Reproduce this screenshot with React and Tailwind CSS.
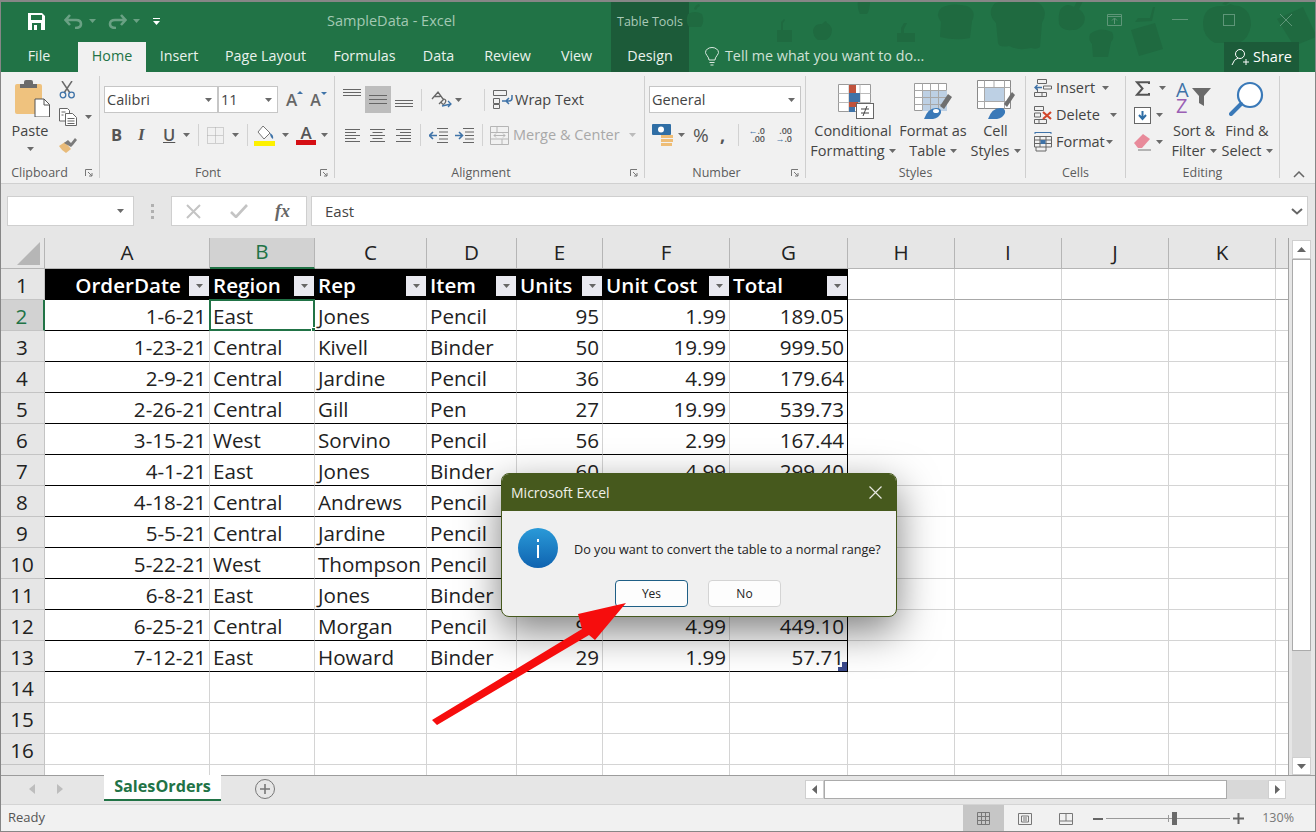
import React from 'react';

const rows = [
  ['1-6-21', 'East', 'Jones', 'Pencil', '95', '1.99', '189.05'],
  ['1-23-21', 'Central', 'Kivell', 'Binder', '50', '19.99', '999.50'],
  ['2-9-21', 'Central', 'Jardine', 'Pencil', '36', '4.99', '179.64'],
  ['2-26-21', 'Central', 'Gill', 'Pen', '27', '19.99', '539.73'],
  ['3-15-21', 'West', 'Sorvino', 'Pencil', '56', '2.99', '167.44'],
  ['4-1-21', 'East', 'Jones', 'Binder', '60', '4.99', '299.40'],
  ['4-18-21', 'Central', 'Andrews', 'Pencil', '75', '1.99', '149.25'],
  ['5-5-21', 'Central', 'Jardine', 'Pencil', '90', '4.99', '449.10'],
  ['5-22-21', 'West', 'Thompson', 'Pencil', '32', '1.99', '63.68'],
  ['6-8-21', 'East', 'Jones', 'Binder', '60', '8.99', '539.40'],
  ['6-25-21', 'Central', 'Morgan', 'Pencil', '90', '4.99', '449.10'],
  ['7-12-21', 'East', 'Howard', 'Binder', '29', '1.99', '57.71'],
];

const headers = ['OrderDate', 'Region', 'Rep', 'Item', 'Units', 'Unit Cost', 'Total'];
const letters = ['A', 'B', 'C', 'D', 'E', 'F', 'G', 'H', 'I', 'J', 'K', ''];
const rightCols = [0, 4, 5, 6];
const tabs = [
  ['Insert', 'w-[66px]'],
  ['Page Layout', 'w-[107px]'],
  ['Formulas', 'w-[91px]'],
  ['Data', 'w-[57px]'],
  ['Review', 'w-[81px]'],
  ['View', 'w-[57px]'],
];

function Caret({ className = '', color = '#6a6a6a' }) {
  return (
    <svg width="7" height="4" viewBox="0 0 7 4" className={`shrink-0 ${className}`}>
      <path d="M0 0h7L3.5 4z" fill={color} />
    </svg>
  );
}

function Launcher() {
  return (
    <svg width="8" height="8" viewBox="0 0 8 8" className="absolute right-[6px] top-[3px]" fill="none" stroke="#777">
      <path d="M.5 7V.5H7" />
      <path d="M3 3l4 4M4 7h3V4" />
    </svg>
  );
}

function Lines({ widths, gap = 3, color = '#666', w = 18, align = 'left' }) {
  return (
    <svg width={w} height={(widths.length - 1) * gap + 1} className="shrink-0">
      {widths.map((lw, i) => (
        <rect
          key={i}
          x={align === 'right' ? w - lw : align === 'center' ? (w - lw) / 2 : 0}
          y={i * gap}
          width={lw}
          height="1"
          fill={color}
        />
      ))}
    </svg>
  );
}

function Sep({ className = '' }) {
  return <div className={`w-px h-[22px] bg-[#d2d2d2] shrink-0 ${className}`} />;
}

function GroupLabel({ text, launcher = false, className = '' }) {
  return (
    <div className="mt-auto -mb-[2px] h-[14px] relative">
      <div className={`leading-[14px] text-[12.5px] text-[#5c5c5c] text-center ${className}`}>{text}</div>
      {launcher && <Launcher />}
    </div>
  );
}

function Decorations() {
  return (
    <svg
      width="640"
      height="72"
      viewBox="676 0 640 72"
      className="absolute right-0 top-0 pointer-events-none"
      fill="#1f6a40"
    >
      <path d="M688 14q7-4 14 0q3 8-1 13h-12q-4-6-1-13zM694 9q1-4 5-5l1 2q-3 1-4 4z" />
      <path d="M777 30h4v-8l3-3 1 1-2 3v7h9v12h-15z" />
      <path d="M813 30q2-7 9-6q3-3 4-3l1 2q3 1 5 6q0 8-6 11h-8q-5-3-5-10z" />
      <path d="M858 0h12q0 10-3 14h-7q-3-6-2-14z" />
      <path d="M897 33h4v-5l3-5h3l-3 6v4h11v9h-18z" />
      <path d="M941 8q10-6 26-2q10 5 5 15l-2 17q-14 3-30-1l1-15q-6-8 0-14z" />
      <path d="M995 3q20-6 44 0q10 8 3 20l-2 24q-3 3-9 1q-12 3-22-2q-10 2-11-3l-2-20q-10-10-1-20z" />
      <path d="M1060 10q6-8 14-3l3-6h6l-4 8q8 6 5 14q-5 8-12 7q-10 1-13-6q-1-8 1-14z" />
      <path d="M1090 34q10-8 22-2q3 6-1 10l-3 15h-15l-1-13q-4-4-2-10z" />
      <path d="M1131 30l24-7 8 26-24 7zM1135 22l3-4 12 0 3-11 2 0-3 14z" />
      <path d="M1203 24q0-18 18-18q7 0 9-2q4 2 9 2q12 4 12 19q-2 14-12 18h-24q-12-6-12-19zM1222 4l6-4 4 0-6 5z" />
      <path d="M1277 19l26-12 13 28v2l-22 9z" />
    </svg>
  );
}

function TitleBar() {
  return (
    <div className="h-[42px] flex relative pt-[2px]">
      <div className="w-[611px] flex items-center shrink-0 pb-[2px]">
        <svg width="17" height="17" viewBox="0 0 17 17" className="ml-[28px]">
          <path d="M0 0h14l3 3v14H0z" fill="#fff" />
          <rect x="3" y="2" width="11" height="5" fill="#217346" />
          <rect x="4" y="10" width="9" height="7" fill="#217346" />
          <rect x="6" y="12" width="3" height="5" fill="#fff" />
        </svg>
        <svg width="19" height="15" viewBox="0 0 19 15" className="ml-[19px]" fill="none" stroke="#6aa184" strokeWidth="2.6">
          <path d="M2 6h10q5 0 5 4t-6 4M6 1L1.500 6 6 11" />
        </svg>
        <Caret className="ml-[6px]" color="#6aa184" />
        <svg width="19" height="15" viewBox="0 0 19 15" className="ml-[12px]" fill="none" stroke="#6aa184" strokeWidth="2.6">
          <path d="M17 6H7q-5 0-5 4t6 4M13 1l4.500 5L13 11" />
        </svg>
        <Caret className="ml-[6px]" color="#6aa184" />
        <svg width="7" height="7" viewBox="0 0 7 7" className="ml-[13px]">
          <rect width="7" height="1" fill="#fff" />
          <path d="M0 3h7L3.500 7z" fill="#fff" />
        </svg>
        <div className="ml-[167px] text-[14.5px] text-[#a3c9b3] whitespace-nowrap">SampleData - Excel</div>
      </div>
      <div className="w-[78px] -mt-[2px] bg-[#1c5b39] flex items-center justify-center text-[12.5px] text-[#a9c9b7] shrink-0 pt-[3px]">
        Table Tools
      </div>
      <Decorations />
      <div className="ml-auto mr-[23px] flex items-center relative pb-[5px]">
        <svg width="15" height="12" viewBox="0 0 15 12" fill="none" stroke="#5e9678">
          <path d="M.5.500h14v11H.5zM.5 2.500h14M7.500 10V4.500M5 6.500l2.500-2.500L10 6.500" />
        </svg>
        <div className="w-[16px] h-px bg-[#5e9678] ml-[50px]" />
        <div className="w-[12px] h-[12px] border border-[#5e9678] ml-[35px]" />
        <svg width="14" height="14" viewBox="0 0 14 14" className="ml-[44px]" stroke="#5e9678">
          <path d="M1 1l12 12M13 1L1 13" />
        </svg>
      </div>
    </div>
  );
}

function TabRow() {
  return (
    <div className="h-[30px] flex text-[14.3px] text-[#e9f2ec] relative">
      <div className="w-[78px] flex items-center justify-center pb-[2px]">File</div>
      <div className="w-[68px] bg-[#f1f1f1] text-[#217346] flex items-center justify-center pb-[2px]">Home</div>
      {tabs.map(([name, w]) => (
        <div key={name} className={`${w} flex items-center justify-center pb-[2px]`}>{name}</div>
      ))}
      <div className="w-[6px]" />
      <div className="w-[78px] bg-[#1c5b39] flex items-center justify-center pb-[2px]">Design</div>
      <div className="flex items-center ml-[16px] text-[#cfe1d6] pb-[2px]">
        <svg width="14" height="19" viewBox="0 0 14 19" fill="none" stroke="#dbe8e0">
          <path d="M4 13q0-2-2-4.500Q.5 6.500.5 5.500a6.500 5 0 0 1 13 0q0 1-1.500 3Q10 11 10 13zM4.500 15.500h5M5.500 18h3" />
        </svg>
        <span className="ml-[6px]">Tell me what you want to do...</span>
      </div>
      <div className="ml-auto mr-[17px] w-[75px] bg-[#1c5b39] flex items-center justify-center text-white gap-[3px] text-[14.5px]">
        <svg width="19" height="19" viewBox="0 0 19 19" fill="none" stroke="#fff">
          <circle cx="9" cy="6" r="4.500" />
          <path d="M1 17q2-6 6-7M12 14h6M15 11v6" />
        </svg>
        Share
      </div>
    </div>
  );
}

function ClipboardGroup() {
  return (
    <div className="w-[100px] shrink-0 border-r border-[#cfcfcf] flex flex-col">
      <div className="flex">
        <div className="ml-[11px] w-[38px] flex flex-col items-center pt-[4px]">
          <svg width="35" height="37" viewBox="0 0 35 37" className="ml-[4px]">
            <rect y="4" width="27" height="30" rx="2" fill="#efc27e" />
            <path d="M5 4h4V2q0-2 2-2h5q2 0 2 2v2h4v4H5z" fill="#6b6b6b" />
            <path d="M20 19h9l5.500 5.500V37H20z" fill="#fff" stroke="#555" />
            <path d="M29 19v6h5.500" fill="none" stroke="#555" />
          </svg>
          <div className="text-[14.5px] leading-[20px] text-[#444] mt-[4px]">Paste</div>
          <Caret className="mt-[6px]" />
        </div>
        <div className="ml-[10px] pt-[5px] flex flex-col">
          <svg width="17" height="18" viewBox="0 0 17 18" fill="none">
            <path d="M3 0l8 12M13 0L5 12" stroke="#6a6a6a" strokeWidth="1.500" />
            <circle cx="4" cy="14" r="2.800" stroke="#3f73a8" strokeWidth="1.300" />
            <circle cx="12.500" cy="14" r="2.800" stroke="#3f73a8" strokeWidth="1.300" />
          </svg>
          <div className="flex items-center mt-[9px]">
            <svg width="18" height="18" viewBox="0 0 18 18" fill="#fff" stroke="#666">
              <path d="M.5.500h8l2 2V13H.500z" />
              <path d="M6.500 5.500h7l4 4v8h-11z" />
              <path d="M8.500 10.500h7M8.500 13h7M8.500 15.500h7M2.500 4h4M2.500 7h2" fill="none" />
            </svg>
            <Caret className="ml-[8px]" />
          </div>
          <svg width="18" height="16" viewBox="0 0 18 16" className="mt-[11px]">
            <path d="M0 9l6-4 6 7-5 4q-4-2-7-7z" fill="#e8bb7a" />
            <path d="M5 6l4-3 3 3 4-5 2 2-4 5-2 2z" fill="#7b7b7b" />
          </svg>
        </div>
      </div>
      <GroupLabel text="Clipboard" launcher className="pr-[20px]" />
    </div>
  );
}

function ComboBox({ text, className = '' }) {
  return (
    <div className={`h-[27px] bg-white border border-[#c6c6c6] flex items-center pl-[2px] pr-[5px] text-[14.5px] text-[#444] shrink-0 ${className}`}>
      <span className="flex-1">{text}</span>
      <Caret />
    </div>
  );
}

function FontGroup() {
  return (
    <div className="w-[235px] shrink-0 border-r border-[#cfcfcf] flex flex-col">
      <div className="flex items-center pl-[4px] pt-[10px]">
        <ComboBox text="Calibri" className="w-[114px]" />
        <ComboBox text="11" className="w-[60px]" />
        <div className="ml-[8px] relative text-[17px] font-semibold text-[#666] leading-none">
          A
          <svg width="6" height="3" className="absolute -right-[6px] top-0"><path d="M0 3h6L3 0z" fill="#3f73a8" /></svg>
        </div>
        <div className="ml-[13px] relative text-[16px] font-semibold text-[#666] leading-none">
          A
          <svg width="6" height="3" className="absolute -right-[6px] top-0"><path d="M0 0h6L3 3z" fill="#3f73a8" /></svg>
        </div>
      </div>
      <div className="flex items-center h-[24px] mt-[10px] text-[#555]">
        <span className="ml-[11px] w-[10px] font-bold text-[16.5px]">B</span>
        <span className="ml-[17px] w-[8px] italic font-bold text-[17px] [font-family:'Liberation_Serif',serif]">I</span>
        <span className="ml-[17px] w-[11px] font-semibold text-[16.5px] underline">U</span>
        <Caret className="ml-[9px]" />
        <Sep className="ml-[8px]" />
        <svg width="17" height="17" viewBox="0 0 17 17" className="ml-[8px]" fill="none" stroke="#aaa" strokeDasharray="1 1">
          <path d="M.5.500h16v16H.5zM8.500.500v16M.5 8.500h16" />
        </svg>
        <Caret className="ml-[8px]" />
        <Sep className="ml-[8px]" />
        <svg width="22" height="21" viewBox="0 0 22 21" className="ml-[6px]">
          <path d="M9 1l7 7-6 6-6-7z" fill="#fff" stroke="#777" />
          <path d="M16 8q4 2 3 6q-3-2-3-6z" fill="#3f73a8" />
          <rect y="16" width="21" height="5" fill="#fdf100" />
        </svg>
        <Caret className="ml-[6px]" />
        <div className="ml-[7px] flex flex-col items-center w-[20px]">
          <span className="text-[17px] leading-[15px] font-semibold text-[#555]">A</span>
          <div className="w-[20px] h-[5px] bg-[#d50f14]" />
        </div>
        <Caret className="ml-[5px]" />
      </div>
      <GroupLabel text="Font" launcher className="pr-[18px]" />
    </div>
  );
}

function AlignmentGroup() {
  return (
    <div className="w-[310px] shrink-0 border-r border-[#cfcfcf] flex flex-col">
      <div className="flex items-center pt-[10px] h-[37px]">
        <div className="ml-[8px] -mt-[15px]"><Lines widths={[18, 18, 18]} gap={3} /></div>
        <div className="ml-[4px] w-[26px] h-[27px] bg-[#bdbdbd] flex items-center justify-center shrink-0">
          <Lines widths={[18, 18, 18]} gap={4} />
        </div>
        <div className="ml-[4px] mt-[8px]"><Lines widths={[18, 18, 18]} gap={3} /></div>
        <Sep className="ml-[8px]" />
        <svg width="23" height="19" viewBox="0 0 23 19" className="ml-[8px]" fill="none" stroke="#666" strokeWidth="1.300">
          <path d="M2 9l6-7 5 7M4 6.500h6M9 14l5-5q3 1 1 4t-4-1" />
          <path d="M12 16l9-2M18 11l3 3-3 3" stroke="#3f73a8" />
        </svg>
        <Caret className="ml-[2px]" />
        <Sep className="ml-[22px]" />
        <svg width="20" height="19" viewBox="0 0 20 19" className="ml-[8px]" fill="none" stroke="#666">
          <path d="M.5.500h13v5H.5zM.5 8.500h6v5H.5zM.5 14.500h6v4H.5z" />
          <path d="M9 11h7q3 0 3-3V5M16 8l-3 3 3 3" stroke="#3f73a8" strokeWidth="1.500" />
        </svg>
        <span className="ml-[2px] text-[14.5px] text-[#444]">Wrap Text</span>
      </div>
      <div className="flex items-center h-[24px] mt-[10px]">
        <div className="ml-[10px]"><Lines widths={[15, 11, 15, 11, 15]} w={15} /></div>
        <div className="ml-[10px]"><Lines widths={[15, 10, 15, 10, 15]} w={15} align="center" /></div>
        <div className="ml-[11px]"><Lines widths={[15, 11, 15, 11, 15]} w={15} align="right" /></div>
        <Sep className="ml-[9px]" />
        <svg width="19" height="15" viewBox="0 0 19 15" className="ml-[8px]" fill="none">
          <path d="M8 .5h11M10 4h9M10 7.500h9M10 11h9M8 14.500h11" stroke="#666" />
          <path d="M8 7.500H1M4 4L.5 7.500 4 11" stroke="#3f73a8" strokeWidth="1.600" />
        </svg>
        <svg width="19" height="15" viewBox="0 0 19 15" className="ml-[7px]" fill="none">
          <path d="M8 .5h11M10 4h9M10 7.500h9M10 11h9M8 14.500h11" stroke="#666" />
          <path d="M0 7.500h7M4 4l3.500 3.500L4 11" stroke="#3f73a8" strokeWidth="1.600" />
        </svg>
        <Sep className="ml-[8px]" />
        <svg width="19" height="19" viewBox="0 0 19 19" className="ml-[7px]" fill="none" stroke="#b5b5b5">
          <path d="M.5.500h18v18H.5zM.5 6.500h18M.5 13h18M7 .5v6M12 13v5.500" />
          <path d="M4 9.500h11M6 7.500l-2 2 2 2M13 7.500l2 2-2 2" />
        </svg>
        <span className="ml-[4px] text-[14.5px] text-[#a8a8a8] whitespace-nowrap">Merge &amp; Center</span>
        <Caret className="ml-[9px]" color="#bbb" />
      </div>
      <GroupLabel text="Alignment" launcher className="pr-[17px]" />
    </div>
  );
}

function NumberGroup() {
  return (
    <div className="w-[161px] shrink-0 border-r border-[#cfcfcf] flex flex-col">
      <div className="flex pl-[4px] pt-[10px]">
        <ComboBox text="General" className="w-[152px]" />
      </div>
      <div className="flex items-center h-[24px] mt-[10px]">
        <svg width="22" height="22" viewBox="0 0 22 22" className="ml-[7px]">
          <rect width="19" height="11" rx="1" fill="#2f6ea5" />
          <circle cx="9" cy="5.500" r="3" fill="#fff" />
          <path d="M9 11h12v3H9zM9 15h12v3H9zM9 19h11v3H9z" fill="#eebd76" />
        </svg>
        <Caret className="ml-[4px]" />
        <span className="ml-[8px] w-[18px] text-[19px] text-[#555]">%</span>
        <span className="ml-[9px] w-[6px] text-[18px] font-bold text-[#555] leading-[10px]">,</span>
        <Sep className="ml-[12px]" />
        <div className="ml-[8px] w-[18px] flex flex-col items-end text-[9px] leading-[8px] text-[#555] font-semibold">
          <span><span className="text-[#3f73a8]">←</span>.0</span>
          <span>.00</span>
        </div>
        <div className="ml-[10px] w-[17px] flex flex-col items-end text-[9px] leading-[8px] text-[#555] font-semibold">
          <span>.00</span>
          <span><span className="text-[#3f73a8]">→</span>.0</span>
        </div>
      </div>
      <GroupLabel text="Number" launcher className="pr-[17px]" />
    </div>
  );
}

function StyleLabel({ a, b }) {
  return (
    <div className="text-[14.5px] leading-[20px] text-[#444] text-center whitespace-nowrap">
      <div>{a}</div>
      <div className="flex items-center justify-center gap-[4px]">
        {b}
        <Caret />
      </div>
    </div>
  );
}

function StylesGroup() {
  return (
    <div className="w-[220px] shrink-0 border-r border-[#cfcfcf] flex flex-col">
      <div className="flex">
        <div className="w-[94px] flex flex-col items-center pt-[8px]">
          <svg width="36" height="35" viewBox="0 0 36 35" className="ml-[5px]">
            <path d="M.5.500h32v27H.5z" fill="#fff" stroke="#9a9a9a" />
            <path d="M.5 9.500h32M.5 18.500h32M11 .5v27M22 .5v27" stroke="#bbb" />
            <rect x="11" y="1" width="7" height="8" fill="#c0533d" />
            <rect x="11" y="9" width="11" height="9" fill="#3f73a8" />
            <rect x="11" y="18" width="9" height="5" fill="#c0533d" />
            <rect x="11" y="23" width="6" height="5" fill="#3f73a8" />
            <rect x="18.500" y="19.500" width="17" height="15" fill="#fff" stroke="#666" />
            <path d="M23 25h8M23 29h8M29 22l-4 10" stroke="#444" />
          </svg>
          <div className="mt-[2px]"><StyleLabel a="Conditional" b="Formatting" /></div>
        </div>
        <div className="w-[66px] flex flex-col items-center pt-[7px]">
          <svg width="38" height="36" viewBox="0 0 38 36">
            <path d="M.5.500h32v27H.5z" fill="#fff" stroke="#9a9a9a" />
            <rect x="8" y="7" width="25" height="21" fill="#bdd0e4" />
            <path d="M.5 7.500h32M.5 14.500h32M.5 21.500h32M8.500.5v27M16.500.5v27M24.500.5v27" stroke="#a8a8a8" />
            <path d="M26 23l8-12 4 3-8 12z" fill="#6f6f6f" />
            <path d="M10 36q4-11 12-11q6 0 5 5q-2 5-8 6z" fill="#3a79b8" />
            <ellipse cx="22" cy="28" rx="3" ry="2" fill="#fff" />
          </svg>
          <div className="mt-[2px]"><StyleLabel a="Format as" b="Table" /></div>
        </div>
        <div className="w-[59px] flex flex-col items-center pt-[4px]">
          <svg width="38" height="39" viewBox="0 0 38 39">
            <path d="M.5.500h33v28H.5z" fill="#fff" stroke="#8a8a8a" />
            <rect x="7" y="7" width="20" height="15" fill="#bdd0e4" />
            <path d="M.5 7.500h33M.5 21.500h33M7.500.5v28M27.500.5v28M17 .5v7" stroke="#a8a8a8" />
            <path d="M27 24l8-12 3 3-8 12z" fill="#6f6f6f" />
            <path d="M11 39q4-11 12-11q6 0 5 5q-2 5-8 6z" fill="#3a79b8" />
          </svg>
          <div className="mt-[2px]"><StyleLabel a="Cell" b="Styles" /></div>
        </div>
      </div>
      <GroupLabel text="Styles" />
    </div>
  );
}

function CellsGroup() {
  return (
    <div className="w-[100px] shrink-0 border-r border-[#cfcfcf] flex flex-col">
      <div className="pl-[8px] pt-[2px] flex flex-col gap-[7px] text-[14.5px] text-[#444]">
        <div className="h-[20px] flex items-center">
          <svg width="18" height="18" viewBox="0 0 18 18" fill="none" stroke="#666">
            <path d="M3.500.500h9v4h-9zM.5 13.500h12v4H.5zM3.500 9.500v4M8 13.500v4M9.500 7h8v3h-8z" />
            <path d="M8 8.500H1M3.500 6L1 8.500 3.500 11" stroke="#3f73a8" strokeWidth="1.400" />
          </svg>
          <span className="ml-[4px] w-[42px]">Insert</span>
          <Caret className="ml-[4px]" />
        </div>
        <div className="h-[20px] flex items-center">
          <svg width="19" height="18" viewBox="0 0 19 18" fill="none" stroke="#666">
            <path d="M.5.500h9v4h-9zM.5 7h6v4h-6zM.5 13.500h12v4H.5zM5 13.500v4" />
            <path d="M9 6l8 7M17 6l-8 7" stroke="#d2472c" strokeWidth="2.200" />
          </svg>
          <span className="ml-[3px] w-[45px]">Delete</span>
          <Caret className="ml-[9px]" />
        </div>
        <div className="h-[20px] flex items-center">
          <svg width="18" height="20" viewBox="0 0 18 20" fill="none" stroke="#666">
            <path d="M1 .5h16M1 0v2M17 0v2" stroke="#3f73a8" />
            <path d="M.5 4.500h17V15H.5zM6 4.500V15M12 4.500V15M.5 8h17M.5 11.500h17M2 15v4h10v-4" />
            <rect x="6.500" y="8" width="5" height="4" fill="#3f73a8" stroke="none" />
          </svg>
          <span className="ml-[4px] w-[50px]">Format</span>
          <Caret />
        </div>
      </div>
      <GroupLabel text="Cells" />
    </div>
  );
}

function EditingGroup() {
  return (
    <div className="w-[154px] shrink-0 border-r border-[#cfcfcf] flex flex-col">
      <div className="flex">
        <div className="ml-[8px] w-[37px] pt-[2px] flex flex-col gap-[7px]">
          <div className="h-[20px] flex items-center">
            <svg width="15" height="15" viewBox="0 0 15 15" className="ml-[1px]" fill="none" stroke="#555" strokeWidth="2">
              <path d="M14 3V1.200H2L7.500 7.500 2 13.800h12V12" />
            </svg>
            <Caret className="ml-[9px]" />
          </div>
          <div className="h-[20px] flex items-center">
            <svg width="17" height="17" viewBox="0 0 17 17">
              <rect x=".5" y=".5" width="16" height="16" fill="#fff" stroke="#666" />
              <path d="M8.500 4v7M5 8l3.500 4L12 8" fill="none" stroke="#2f6ea5" strokeWidth="2" />
            </svg>
            <Caret className="ml-[5px]" />
          </div>
          <div className="h-[20px] flex items-center">
            <svg width="18" height="17" viewBox="0 0 18 17">
              <path d="M0 9l9-9 7 5-8 9H4z" fill="#e88a9a" />
              <path d="M4 16h13" stroke="#777" />
            </svg>
            <Caret className="ml-[4px]" />
          </div>
        </div>
        <div className="w-[46px] flex flex-col items-center pt-[5px]">
          <div className="flex h-[35px] w-[36px] shrink-0">
            <div className="flex flex-col text-[20px] leading-[16px] w-[16px] pt-[1px]">
              <span className="text-[#3f73a8]">A</span>
              <span className="text-[#9a5fb4]">Z</span>
            </div>
            <svg width="19" height="18" viewBox="0 0 19 18" className="mt-[7px]">
              <path d="M0 0h19l-7 8v10l-5-3V8z" fill="#6a6a6a" />
            </svg>
          </div>
          <div className="mt-[5px]"><StyleLabel a="Sort &" b="Filter" /></div>
        </div>
        <div className="ml-[4px] w-[52px] flex flex-col items-center pt-[5px]">
          <svg width="36" height="35" viewBox="0 0 36 35" fill="none" className="shrink-0">
            <circle cx="21" cy="14" r="12" stroke="#3a79b8" strokeWidth="2.200" fill="#fff" />
            <path d="M12 23L2 33" stroke="#3a79b8" strokeWidth="4" strokeLinecap="round" />
          </svg>
          <div className="mt-[5px]"><StyleLabel a="Find &" b="Select" /></div>
        </div>
      </div>
      <GroupLabel text="Editing" />
    </div>
  );
}

function Ribbon() {
  return (
    <div className="h-[112px] bg-[#f1f1f1] border-b border-[#d0d0d0] flex pt-[4px] pb-[5px]">
      <ClipboardGroup />
      <FontGroup />
      <AlignmentGroup />
      <NumberGroup />
      <StylesGroup />
      <CellsGroup />
      <EditingGroup />
      <div className="flex-1 flex items-end justify-end pr-[11px]">
        <svg width="12" height="7" viewBox="0 0 12 7" fill="none" stroke="#666" strokeWidth="1.500">
          <path d="M1 6l5-5 5 5" />
        </svg>
      </div>
    </div>
  );
}

function FormulaBar() {
  return (
    <div className="h-[54px] bg-[#e6e6e6] flex items-start pt-[12px] pl-[7px] pr-[8px]">
      <div className="w-[127px] h-[30px] bg-white border border-[#cfcfcf] flex items-center justify-end pr-[9px]">
        <Caret />
      </div>
      <div className="w-[37px] h-[30px] flex items-center justify-center">
        <div className="flex flex-col gap-[3px]">
          <div className="w-[3px] h-[3px] bg-[#b0b0b0]" />
          <div className="w-[3px] h-[3px] bg-[#b0b0b0]" />
          <div className="w-[3px] h-[3px] bg-[#b0b0b0]" />
        </div>
      </div>
      <div className="w-[136px] h-[30px] bg-white border border-[#cfcfcf] flex items-center shrink-0">
        <svg width="15" height="15" viewBox="0 0 15 15" className="ml-[14px]" stroke="#c4c4c4" strokeWidth="2">
          <path d="M1 1l13 13M14 1L1 14" />
        </svg>
        <svg width="18" height="14" viewBox="0 0 18 14" className="ml-[29px]" fill="none" stroke="#c4c4c4" strokeWidth="2.600">
          <path d="M1 8l5 5L17 1" />
        </svg>
        <span className="ml-[27px] text-[18px] italic text-[#666] [font-family:'Liberation_Serif',serif] font-bold">fx</span>
      </div>
      <div className="ml-[4px] flex-1 h-[30px] bg-white border border-[#cfcfcf] flex items-center pl-[13px] pr-[4px] text-[15px] text-[#444]">
        <span className="flex-1">East</span>
        <svg width="12" height="7" viewBox="0 0 12 7" fill="none" stroke="#666" strokeWidth="2">
          <path d="M1 1l5 4.500L11 1" />
        </svg>
      </div>
    </div>
  );
}

function Sheet() {
  return (
    <div className="flex-1 min-w-0 h-[537px] overflow-hidden border-r border-[#a3a3a3] grid grid-cols-[45px_165px_105px_112px_90px_86px_127px_118px_107px_107px_107px_107px_13px] auto-rows-[31px] content-start text-[20.6px] text-[#222]">
      <div className="bg-[#e6e6e6] border-r border-b border-[#b5b5b5] flex items-end justify-end pr-[4px] pb-[3px]">
        <svg width="23" height="23" viewBox="0 0 23 23"><path d="M23 0v23H0z" fill="#b6b6b6" /></svg>
      </div>
      {letters.map((l, i) => (
        <div
          key={l + i}
          className={
            i === 1
              ? 'bg-[#d2d2d2] border-r border-[#b5b5b5] border-b-2 border-b-[#217346] flex items-center justify-center text-[#217346] pb-[2px]'
              : 'bg-[#e6e6e6] border-r border-b border-[#b5b5b5] flex items-center justify-center pb-[2px]'
          }
        >
          {l}
        </div>
      ))}

      <div className="bg-[#e6e6e6] border-r border-b border-[#c4c4c4] flex items-center justify-center pt-[2px]">1</div>
      {headers.map((h, i) => (
        <div
          key={h}
          className={`bg-black text-white font-semibold flex items-center border-b border-black pr-px pt-[2px] ${i === 0 ? 'pl-[25px]' : 'pl-[3px]'}`}
        >
          <span className={i === 0 ? 'ml-auto' : 'flex-1'}>{h}</span>
          <div className={`w-[20px] h-[20px] mt-[2px] bg-[#e9e9f0] flex items-center justify-center shrink-0 ${i === 0 ? 'ml-[8px]' : ''}`}>
            <Caret color="#666" />
          </div>
        </div>
      ))}
      {letters.slice(7).map((l, i) => (
        <div key={i} className="bg-white border-r border-[#d4d4d4] border-b border-b-[#a8a8a8]" />
      ))}

      {rows.map((row, r) => (
        <React.Fragment key={r}>
          <div
            className={
              r === 0
                ? 'bg-[#d2d2d2] border-r-2 border-[#217346] border-b border-b-[#c4c4c4] flex items-center justify-center text-[#217346] pt-[2px]'
                : 'bg-[#e6e6e6] border-r border-b border-[#c4c4c4] flex items-center justify-center pt-[2px]'
            }
          >
            {r + 2}
          </div>
          {row.map((v, c) => (
            <div
              key={c}
              className={`relative bg-white border-b border-black flex items-center whitespace-nowrap pt-[2px] ${c === 6 ? 'border-r border-r-black' : 'border-r border-r-[#d4d4d4]'} ${rightCols.includes(c) ? 'justify-end pr-[3px]' : 'pl-[3px]'}`}
            >
              {v}
              {r === 0 && c === 1 && (
                <div className="absolute -left-px -top-px -right-px -bottom-px border-2 border-[#217346]">
                  <div className="absolute -right-[3px] -bottom-[3px] w-[5px] h-[5px] bg-[#217346] border border-white" />
                </div>
              )}
              {r === 11 && c === 6 && (
                <svg width="9" height="9" viewBox="0 0 9 9" className="absolute right-0 bottom-0">
                  <path d="M9 0v9H0V5h4V0z" fill="#3b4a8c" />
                </svg>
              )}
            </div>
          ))}
          {letters.slice(7).map((l, i) => (
            <div key={i} className="bg-white border-r border-b border-[#d4d4d4]" />
          ))}
        </React.Fragment>
      ))}

      {[14, 15, 16, 17].map((n) => (
        <React.Fragment key={n}>
          <div className="bg-[#e6e6e6] border-r border-b border-[#c4c4c4] flex items-center justify-center pt-[2px]">{n}</div>
          {letters.map((l, i) => (
            <div key={i} className="bg-white border-r border-b border-[#d4d4d4]" />
          ))}
        </React.Fragment>
      ))}
    </div>
  );
}

function VScroll() {
  return (
    <div className="w-[27px] shrink-0 h-[537px] pt-[2px] pl-[3px] flex flex-col bg-[#e6e6e6]">
      <div className="w-[19px] h-[19px] bg-white border border-[#cfcfcf] flex items-center justify-center">
        <svg width="9" height="5" viewBox="0 0 9 5"><path d="M0 5h9L4.500 0z" fill="#666" /></svg>
      </div>
      <div className="w-[19px] h-[392px] bg-white border border-[#ababab]" />
      <div className="w-[19px] flex-1 bg-[#d8d8d8]" />
      <div className="w-[19px] h-[18px] bg-white border border-[#cfcfcf] flex items-center justify-center">
        <svg width="9" height="5" viewBox="0 0 9 5"><path d="M0 0h9L4.500 5z" fill="#666" /></svg>
      </div>
    </div>
  );
}

function SheetTabs() {
  return (
    <div className="h-[29px] bg-[#e6e6e6] border-t border-[#9c9c9c] flex">
      <div className="w-[104px] flex items-center shrink-0 pb-[2px]">
        <svg width="6" height="10" viewBox="0 0 6 10" className="ml-[29px]"><path d="M6 0v10L0 5z" fill="#bdbdbd" /></svg>
        <svg width="6" height="10" viewBox="0 0 6 10" className="ml-[22px]"><path d="M0 0v10l6-5z" fill="#bdbdbd" /></svg>
      </div>
      <div className="w-[117px] h-[26px] -mt-px bg-white border-b-2 border-[#217346] flex items-center justify-center text-[16.2px] font-bold text-[#217346] shrink-0 pb-px">
        SalesOrders
      </div>
      <div className="flex items-center ml-[34px] pb-[2px]">
        <svg width="20" height="20" viewBox="0 0 20 20" fill="none" stroke="#777">
          <circle cx="10" cy="10" r="9.500" />
          <path d="M10 5v10M5 10h10" strokeWidth="1.600" />
        </svg>
      </div>
      <div className="ml-auto mr-[30px] w-[481px] h-[19px] mt-[4px] flex">
        <div className="w-[19px] h-[19px] bg-white border border-[#cfcfcf] flex items-center justify-center shrink-0">
          <svg width="5" height="9" viewBox="0 0 5 9"><path d="M5 0v9L0 4.500z" fill="#666" /></svg>
        </div>
        <div className="w-[403px] bg-white border border-[#ababab] shrink-0" />
        <div className="flex-1 bg-[#d8d8d8]" />
        <div className="w-[18px] h-[19px] bg-white border border-[#cfcfcf] flex items-center justify-center shrink-0">
          <svg width="5" height="9" viewBox="0 0 5 9"><path d="M0 0v9l5-4.500z" fill="#666" /></svg>
        </div>
      </div>
    </div>
  );
}

function StatusBar() {
  return (
    <div className="h-[28px] bg-[#f1f1f1] border-t border-[#d4d4d4] flex items-center text-[13px] text-[#555]">
      <span className="ml-[8px] pb-[2px]">Ready</span>
      <div className="ml-auto w-[41px] h-full bg-[#c6c6c6] flex items-center justify-center">
        <svg width="13" height="13" viewBox="0 0 13 13" fill="none" stroke="#777">
          <path d="M.5.500h12v12H.5zM4.500.5v12M8.500.5v12M.5 4.500h12M.5 8.500h12" />
        </svg>
      </div>
      <svg width="14" height="12" viewBox="0 0 14 12" className="ml-[14px]" fill="none" stroke="#777">
        <path d="M.5.500h13v11H.5zM3.500 3h7v6h-7zM5 5h4M5 7h4" />
      </svg>
      <svg width="14" height="12" viewBox="0 0 14 12" className="ml-[27px]" fill="none" stroke="#777">
        <path d="M.5.500h13v11H.5zM.5 8h13M7 .5V8" />
      </svg>
      <div className="ml-[20px] w-[10px] h-[2px] bg-[#666]" />
      <div className="ml-[3px] w-[124px] h-px bg-[#999] flex items-center justify-start">
        <div className="ml-[62px] w-px h-[7px] bg-[#999]" />
        <div className="ml-[3px] w-[5px] h-[13px] bg-[#6a6a6a]" />
      </div>
      <svg width="11" height="11" viewBox="0 0 11 11" className="ml-[3px]" stroke="#666" strokeWidth="2">
        <path d="M0 5.500h11M5.500 0v11" />
      </svg>
      <span className="ml-[18px] mr-[22px] text-[12.500px] text-[#777]">130%</span>
    </div>
  );
}

function Dialog() {
  return (
    <div className="absolute left-[501px] top-[473px] w-[396px] h-[144px] rounded-[8px] bg-[#f0f0f0] border border-[#46591d] shadow-[0_14px_40px_rgba(0,0,0,0.5)] flex flex-col overflow-hidden">
      <div className="h-[37px] bg-[#46591d] flex items-center pl-[9px] pr-[14px] text-[14px] text-[#f0f0e8] shrink-0">
        <span className="flex-1">Microsoft Excel</span>
        <svg width="13" height="13" viewBox="0 0 13 13" stroke="#e8e8e0" strokeWidth="1.200">
          <path d="M.5.500l12 12M12.500.5l-12 12" />
        </svg>
      </div>
      <div className="flex items-center pl-[16px] pt-[17px]">
        <svg width="40" height="40" viewBox="0 0 40 40" className="shrink-0">
          <defs>
            <linearGradient id="infoFill" x1="0" y1="0" x2="0" y2="1">
              <stop offset="0" stopColor="#2a9ad8" />
              <stop offset="1" stopColor="#0f63b0" />
            </linearGradient>
          </defs>
          <circle cx="20" cy="20" r="20" fill="url(#infoFill)" />
          <rect x="19" y="17" width="2" height="13" fill="#fff" />
          <rect x="19" y="11" width="2" height="3" fill="#fff" />
        </svg>
        <span className="ml-[16px] pt-[2px] text-[12.65px] text-[#222] whitespace-nowrap">Do you want to convert the table to a normal range?</span>
      </div>
      <div className="flex pl-[113px] pt-[12px] gap-[20px] text-[12px] text-[#222]">
        <div className="w-[73px] h-[27px] bg-[#fdfdfd] border border-[#1f5f86] rounded-[4px] flex items-center justify-center">Yes</div>
        <div className="w-[73px] h-[27px] bg-[#fdfdfd] border border-[#d4d4d4] rounded-[4px] flex items-center justify-center">No</div>
      </div>
    </div>
  );
}

function Arrow() {
  return (
    <svg width="1316" height="832" viewBox="0 0 1316 832" className="absolute left-0 top-0 pointer-events-none">
      <path d="M432 720L582 629L578 614L626 603L595 640L589 635L437 725Z" fill="#f60d0d" />
    </svg>
  );
}

export default function App() {
  return (
    <div className="relative w-[1316px] h-[832px] overflow-hidden bg-white [font-family:'Open_Sans',sans-serif]">
      <div className="bg-[#217346]">
        <TitleBar />
        <TabRow />
      </div>
      <Ribbon />
      <FormulaBar />
      <div className="flex">
        <Sheet />
        <VScroll />
      </div>
      <SheetTabs />
      <StatusBar />
      <Dialog />
      <Arrow />
      <div className="absolute inset-0 border border-t-2 border-[#868686] pointer-events-none" />
    </div>
  );
}
